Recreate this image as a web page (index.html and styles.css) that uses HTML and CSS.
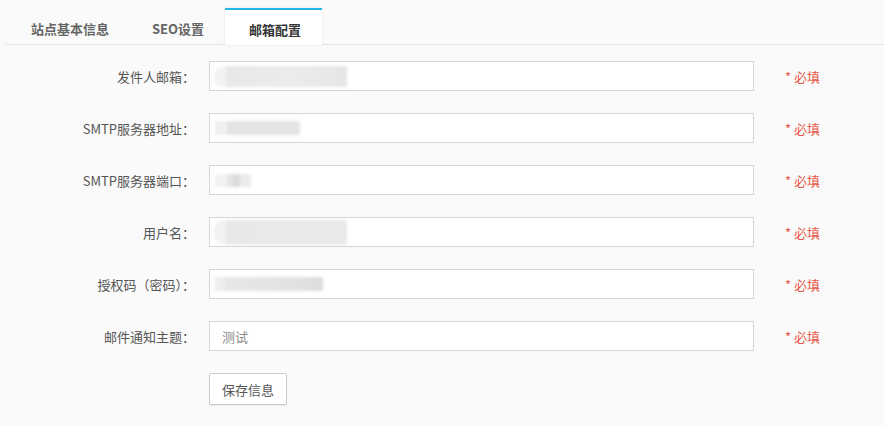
FILE: index.html
```html
<!DOCTYPE html>
<html lang="zh-CN">
<head>
<meta charset="utf-8">
<title>邮箱配置</title>
<link rel="stylesheet" href="styles.css">
</head>
<body>
<div class="page">
  <div class="tabs">
    <div class="tab tab-basic">站点基本信息</div>
    <div class="tab tab-seo">SEO设置</div>
    <div class="tab tab-mail active">邮箱配置</div>
  </div>
  <form class="form">
    <div class="row">
      <label class="label">发件人邮箱：</label>
      <div class="field"><span class="redact r1"></span></div>
      <span class="req">* 必填</span>
    </div>
    <div class="row">
      <label class="label">SMTP服务器地址：</label>
      <div class="field"><span class="redact r2"></span></div>
      <span class="req">* 必填</span>
    </div>
    <div class="row">
      <label class="label">SMTP服务器端口：</label>
      <div class="field"><span class="redact r3"></span></div>
      <span class="req">* 必填</span>
    </div>
    <div class="row">
      <label class="label">用户名：</label>
      <div class="field"><span class="redact r4"></span></div>
      <span class="req">* 必填</span>
    </div>
    <div class="row">
      <label class="label">授权码（密码）：</label>
      <div class="field"><span class="redact r5"></span></div>
      <span class="req">* 必填</span>
    </div>
    <div class="row">
      <label class="label">邮件通知主题：</label>
      <div class="field"><span class="value">测试</span></div>
      <span class="req">* 必填</span>
    </div>
    <div class="row actions">
      <span class="label"></span>
      <button type="button" class="btn">保存信息</button>
    </div>
  </form>
</div>
</body>
</html>
```

FILE: styles.css
```css
* { box-sizing: border-box; }
html, body {
  margin: 0;
  padding: 0;
  background: #fafafa;
}
body {
  font-family: "Microsoft YaHei", "Noto Sans CJK SC", "Liberation Sans", sans-serif;
  font-size: 13px;
  color: #555;
}
.page {
  width: 884px;
  height: 426px;
  overflow: hidden;
}
.tabs {
  display: flex;
  align-items: flex-end;
  margin-left: 5px;
  padding-left: 4px;
  padding-top: 8px;
  height: 45px;
  border-bottom: 1px solid #e3e3e3;
}
.tab {
  height: 36px;
  line-height: 36px;
  padding-top: 3px;
  text-align: center;
  color: #666;
  font-size: 13px;
  font-weight: bold;
}
.tab-basic { width: 122px; }
.tab-seo { width: 94px; }
.tab-mail { width: 97px; padding-left: 3px; }
.tab.active {
  background: #fff;
  color: #333;
  border-top: 2px solid #23b7e5;
  line-height: 34px;
  margin-bottom: -1px;
  height: 37px;
  box-shadow: 0 0 3px rgba(0,0,0,0.08);
}
.form {
  display: flex;
  flex-direction: column;
  gap: 22px;
  margin: 16px 0 0;
}
.row {
  display: flex;
  align-items: center;
  height: 30px;
}
.label {
  width: 195px;
  text-align: right;
  margin-right: 14px;
  color: #555;
  flex: none;
}
.field {
  width: 545px;
  height: 30px;
  border: 1px solid #d5d5d5;
  background: #fff;
  position: relative;
  display: flex;
  align-items: center;
  padding-left: 12px;
  flex: none;
}
.value {
  color: #8a8a8a;
}
.redact {
  display: block;
  background: #e9e9e9;
  filter: blur(1.5px);
}
.r1 { width: 133px; height: 21px; margin-left: -8px; border-radius: 10px 0 0 10px; background: linear-gradient(90deg, #f2f2f2 0, #f2f2f2 12px, #e8e8e8 12px, #ebebeb 60%, #e6e6e6 100%); }
.r2 { width: 85px; height: 14px; margin-left: -7px; background: linear-gradient(90deg, #f0f0f0 0, #f0f0f0 12px, #e3e3e3 12px, #e4e4e4 100%); }
.r3 { width: 36px; height: 13px; margin-left: -7px; background: linear-gradient(90deg, #f2f2f2 0 33%, #e4e4e4 33% 50%, #dcdcdc 50% 70%, #ececec 70%); }
.r4 { width: 133px; height: 25px; margin-left: -8px; border-radius: 10px 0 0 10px; background: linear-gradient(90deg, #f2f2f2 0, #f2f2f2 12px, #e8e8e8 12px, #e9e9e9 100%); }
.r5 { width: 108px; height: 14px; margin-left: -7px; background: linear-gradient(90deg, #eeeeee 0, #eeeeee 10px, #e6e6e6 10px, #e3e3e3 60%, #dddddd 100%); }
.req {
  margin-left: 31px;
  color: #e8533f;
  font-size: 13px;
}
.actions {
  height: 32px;
}
.btn {
  width: 78px;
  height: 32px;
  border: 1px solid #ccc;
  border-radius: 2px;
  background: #fff;
  color: #555;
  font-family: inherit;
  font-size: 13px;
  padding: 0;
  box-shadow: 0 1px 1px rgba(0,0,0,0.06);
}
```
